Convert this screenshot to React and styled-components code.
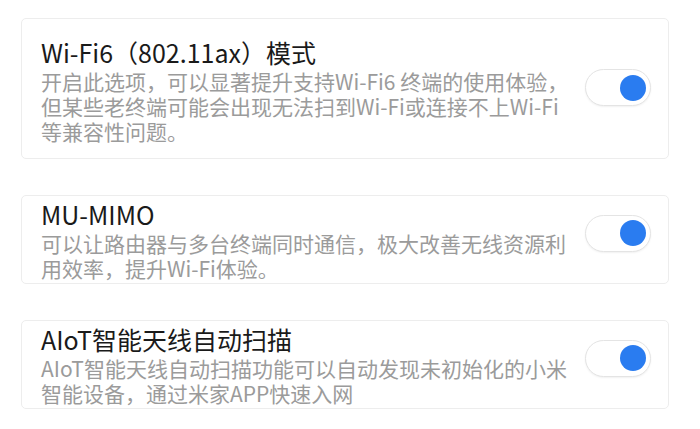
import React, { useState } from 'react';
import styled, { createGlobalStyle } from 'styled-components';

const GlobalStyle = createGlobalStyle`
    html, body {
        margin: 0;
        padding: 0;
        background: #ffffff;
    }
    body {
        font-family: "Noto Sans CJK SC", "Noto Sans", sans-serif;
    }
`;

const settings = [
    {
        id: 'wifi6',
        title: 'Wi-Fi6（802.11ax）模式',
        lines: [
            '开启此选项，可以显著提升支持Wi-Fi6 终端的使用体验，',
            '但某些老终端可能会出现无法扫到Wi-Fi或连接不上Wi-Fi',
            '等兼容性问题。',
        ],
        padTop: 18,
        padBottom: 14,
        lift: 6,
    },
    {
        id: 'mumimo',
        title: 'MU-MIMO',
        lines: ['可以让路由器与多台终端同时通信，极大改善无线资源利', '用效率，提升Wi-Fi体验。'],
        padTop: 3,
        padBottom: 2,
        lift: 14,
    },
    {
        id: 'aiot',
        title: 'AIoT智能天线自动扫描',
        lines: ['AIoT智能天线自动扫描功能可以自动发现未初始化的小米', '智能设备，通过米家APP快速入网'],
        padTop: 3,
        padBottom: 2,
        lift: 14,
    },
];

const App = () => {
    const [enabled, setEnabled] = useState({ wifi6: true, mumimo: true, aiot: true });

    const toggle = (id) => {
        setEnabled((prev) => ({ ...prev, [id]: !prev[id] }));
    };

    return (
        <Page>
            <GlobalStyle />
            {settings.map((item) => (
                <Card key={item.id} padTop={item.padTop} padBottom={item.padBottom}>
                    <Text>
                        <Title>{item.title}</Title>
                        {item.lines.map((line) => (
                            <Desc key={line}>{line}</Desc>
                        ))}
                    </Text>
                    <Switch
                        type="button"
                        on={enabled[item.id] ? 1 : 0}
                        lift={item.lift}
                        onClick={() => toggle(item.id)}
                    >
                        <Knob on={enabled[item.id] ? 1 : 0} />
                    </Switch>
                </Card>
            ))}
        </Page>
    );
};

const Page = styled.div`
    display: flex;
    flex-direction: column;
    gap: 36px;
    padding: 18px 0 0 21px;
    width: 648px;
`;

const Card = styled.div`
    display: flex;
    align-items: center;
    justify-content: space-between;
    box-sizing: border-box;
    padding: ${({ padTop }) => padTop}px 17px ${({ padBottom }) => padBottom}px 19px;
    border: 1px solid #ededed;
    border-radius: 5px;
    background: #ffffff;
`;

const Text = styled.div`
    display: flex;
    flex-direction: column;
`;

const Title = styled.div`
    font-size: 25px;
    line-height: 30px;
    color: #1a1a1a;
    margin-bottom: 2px;
    white-space: nowrap;
`;

const Desc = styled.div`
    font-size: 21px;
    line-height: 25px;
    color: #9b9b9b;
    white-space: nowrap;
`;

const Switch = styled.button`
    position: relative;
    flex: none;
    width: 66px;
    height: 37px;
    margin: 0 0 ${({ lift }) => lift}px 0;
    padding: 0;
    border: 1px solid #e4e4e4;
    border-radius: 19px;
    background: #ffffff;
    box-shadow: 0 1px 2px rgba(0, 0, 0, 0.06);
    cursor: pointer;
`;

const Knob = styled.span`
    position: absolute;
    top: 50%;
    left: ${({ on }) => (on ? '34px' : '4px')};
    width: 26px;
    height: 26px;
    margin-top: -13px;
    border-radius: 50%;
    background: ${({ on }) => (on ? '#2a7cf0' : '#cccccc')};
`;

export default App;
